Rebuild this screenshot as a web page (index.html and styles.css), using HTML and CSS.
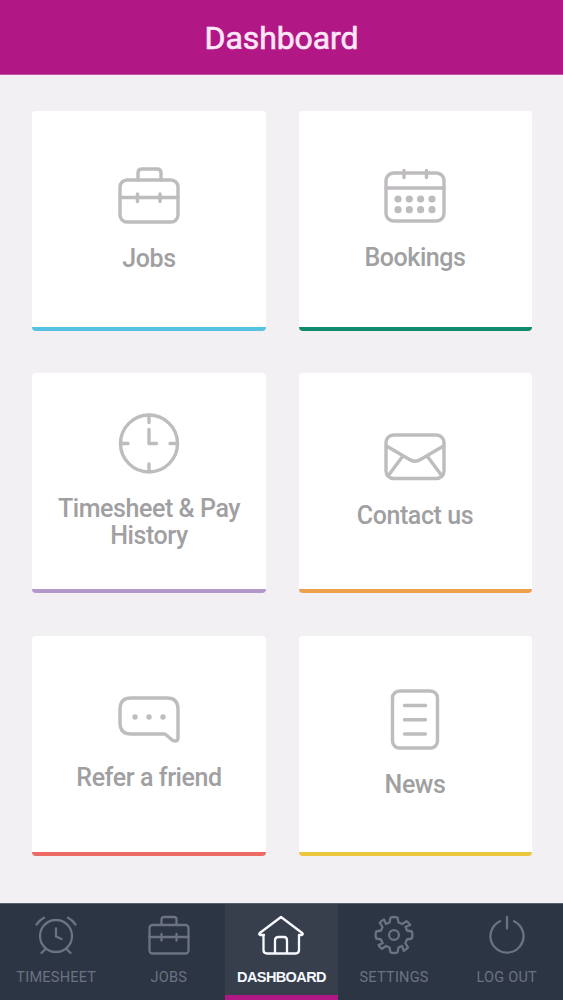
FILE: index.html
```html
<!DOCTYPE html>
<html lang="en">
<head>
<meta charset="utf-8">
<title>Dashboard</title>
<link rel="stylesheet" href="styles.css">
</head>
<body>
<div class="app">
  <header class="header"><h1 class="title">Dashboard</h1></header>
  <main class="grid">
    <a class="card card-blue">
      <svg class="icon" width="62" height="57" viewBox="0 0 62 57"><rect x="2" y="13" width="58" height="42" rx="7"/><path d="M20 13V6q0-4 4-4h15q4 0 4 4v7M2 30.500h16M21 30.500h20M44 30.500h16M19.500 27v7.500M42 27v7.500"/></svg>
      <span class="label">Jobs</span>
    </a>
    <a class="card card-green">
      <svg class="icon" width="62" height="55" viewBox="0 0 62 55"><rect x="2" y="5" width="58" height="48" rx="7.500"/><path d="M2 20h58M20 2.500v7M42.500 2.500v7"/><g class="dots"><circle cx="14" cy="31" r="3.600"/><circle cx="25.300" cy="31" r="3.600"/><circle cx="36.600" cy="31" r="3.600"/><circle cx="48" cy="31" r="3.600"/><circle cx="14" cy="41.700" r="3.600"/><circle cx="25.300" cy="41.700" r="3.600"/><circle cx="36.600" cy="41.700" r="3.600"/><circle cx="48" cy="41.700" r="3.600"/></g></svg>
      <span class="label">Bookings</span>
    </a>
    <a class="card card-purple">
      <svg class="icon" width="62" height="61" viewBox="0 0 62 61"><circle cx="31" cy="30.500" r="28.500"/><path d="M31 2v7.500M31 51v7.500M2.500 30.500h7.500M52 30.500h7.500M31 16.500v14h7.500"/></svg>
      <span class="label">Timesheet &amp; Pay History</span>
    </a>
    <a class="card card-orange">
      <svg class="icon" width="62" height="48" viewBox="0 0 62 48"><rect x="2" y="2" width="58" height="43.500" rx="7.500"/><path d="M2.500 13L25.500 26.500Q31 30 36.500 26.500L59.500 13M18.500 23.500L4 43M43.500 23.500L58 43"/></svg>
      <span class="label">Contact us</span>
    </a>
    <a class="card card-red">
      <svg class="icon" width="62" height="47" viewBox="0 0 62 47"><path d="M13 2H49Q60 2 60 13V42Q60 45 57 45Q55 45 53 43L47 38H13Q2 38 2 27V13Q2 2 13 2Z"/><g class="dots"><circle cx="17" cy="21" r="2.700"/><circle cx="31" cy="21" r="2.700"/><circle cx="45" cy="21" r="2.700"/></g></svg>
      <span class="label">Refer a friend</span>
    </a>
    <a class="card card-yellow">
      <svg class="icon" width="50" height="61" viewBox="0 0 50 61"><rect x="2.500" y="2" width="45" height="57" rx="7"/><path d="M14.500 16.500h21M14.500 30.800h21M14.500 45h21"/></svg>
      <span class="label">News</span>
    </a>
  </main>
  <nav class="nav">
    <a class="tab"><svg class="nav-icon" width="46" height="40" viewBox="0 0 46 40"><circle cx="23" cy="21" r="16"/><path d="M23 13.500v8l5.500 2.500M3.500 9.500Q6.500 5 11 2.700M42.500 9.500Q39.500 5 35 2.700M12.500 34l-4 4M33.500 34l4 4"/></svg><span class="tab-label">TIMESHEET</span></a>
    <a class="tab"><svg class="nav-icon" width="42" height="40" viewBox="0 0 42 40"><rect x="1.500" y="10" width="39" height="28.500" rx="3"/><path d="M13.500 10V4.500q0-2.500 2.500-2.500h10q2.500 0 2.500 2.500V10M1.500 22h10M15.500 22h11M30.500 22h10M13.500 19v6.500M28.500 19v6.500"/></svg><span class="tab-label">JOBS</span></a>
    <a class="tab tab-active"><svg class="nav-icon" width="48" height="40" viewBox="0 0 48 40"><path d="M7 20H3Q1.500 19.500 2.800 18L24 2L45.200 18Q46.500 19.500 45 20H42V35Q42 38.500 38.500 38.500H10Q6.500 38.500 6.500 35V20M18 38V25.500Q18 22 21.500 22H27Q30 22 30 25.500V38"/></svg><span class="tab-label">DASHBOARD</span></a>
    <a class="tab"><svg class="nav-icon" width="40" height="40" viewBox="0 0 40 40"><path d="M16.500 2.500Q20 1.500 23.500 2.500L24.500 7.500L28.300 9L32.500 6.200Q35 7.800 36.200 10L31.600 11.800L33 15.500L37.800 16.500Q39 20 37.800 23.500L33 24.500L31.300 28.200L34 32.300Q32 35 29.800 35.800L28 31L24.500 32.500L23.500 37.500Q20 38.500 16.500 37.500L15.500 32.500L12 31L8 33.800Q5.500 32.500 4.500 30L8.700 28.200L7 24.500L2.200 23.500Q1 20 2.200 16.500L7 15.500L8.500 12L5.800 7.800Q7.500 5.500 10 4.500L12 9L15.500 7.500Z"/><circle cx="20" cy="20" r="4.900"/></svg><span class="tab-label">SETTINGS</span></a>
    <a class="tab"><svg class="nav-icon" width="38" height="40" viewBox="0 0 38 40"><path d="M12 6.200A16.500 16.500 0 1 0 26 6.200M19 2v11.500"/></svg><span class="tab-label">LOG OUT</span></a>
  </nav>
</div>
</body>
</html>
```
FILE: styles.css
```css
* { box-sizing: border-box; }
body { margin: 0; font-family: Roboto, "Liberation Sans", sans-serif; }
.app { width: 563px; height: 1000px; display: flex; flex-direction: column; background: #f2f0f3; }
.header { height: 75px; flex: none; display: flex; align-items: center; justify-content: center; background: #b11886; padding-top: 2px; border-bottom: 1px solid #c650a4; }
.title { margin: 0; font-size: 32px; line-height: 36px; font-weight: 400; color: #fce6f7; -webkit-text-stroke: 0.600px #fce6f7; letter-spacing: -0.100px; }
.grid { flex: 1; display: grid; grid-template-columns: 234px 233px; grid-auto-rows: 220px; column-gap: 32.5px; row-gap: 42.3px; padding: 36px 0 0 32px; }
.card { display: flex; flex-direction: column; align-items: center; justify-content: center; gap: 21px; padding: 0 20px; background: #fff; border-radius: 4px; border-bottom: 4.500px solid; }
.card-blue { border-color: #58c2e3; }
.card-green { border-color: #128a6d; }
.card-purple { border-color: #b498cb; }
.card-orange { border-color: #eea04c; }
.card-red { border-color: #ed6b64; }
.card-yellow { border-color: #edc640; }
.icon, .nav-icon { display: block; flex: none; fill: none; stroke-linecap: round; stroke-linejoin: round; }
.icon { stroke: #bfbcc0; stroke-width: 3.400; }
.dots { fill: #bfbcc0; stroke: none; }
.label { font-size: 25px; line-height: 27px; font-weight: 500; letter-spacing: -0.420px; color: #a0a0a2; text-align: center; }
.nav { height: 97px; flex: none; display: grid; grid-template-columns: repeat(5, 1fr); background: #2c3543; border-top: 1px solid #596170; }
.tab { display: flex; flex-direction: column; align-items: center; padding-top: 11px; gap: 14px; color: #6b7380; }
.tab-active { color: #f6f8fd; background: #373f4d; border-bottom: 5px solid #b11886; }
.nav-icon { stroke: currentColor; stroke-width: 2.300; }
.tab-label { font-size: 14.500px; line-height: 18px; letter-spacing: 0.250px; white-space: nowrap; }
.tab-active .tab-label { font-family: "Liberation Sans", Arial, sans-serif; font-weight: 700; line-height: 16px; letter-spacing: -0.600px; }
```
